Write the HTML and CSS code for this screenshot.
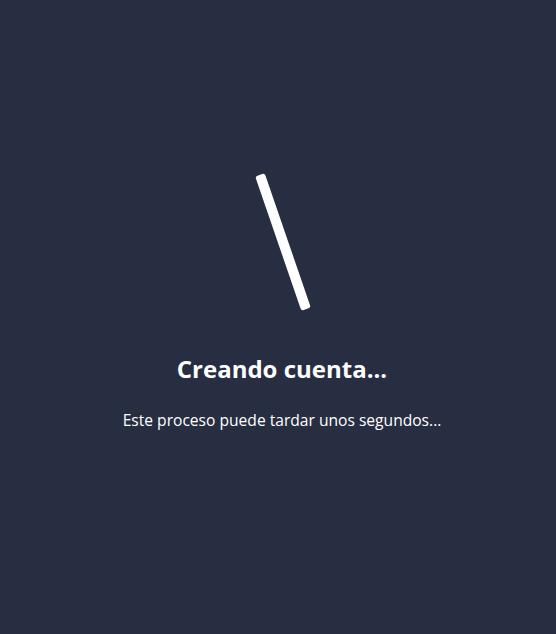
FILE: index.html
```html
<!DOCTYPE html>
<html lang="es">
<head>
<meta charset="utf-8">
<link rel="stylesheet" href="styles.css">
</head>
<body>
<main class="screen">
  <div class="spinner">
    <svg width="70" height="150" viewBox="0 0 70 150">
      <rect x="30" y="4" width="10" height="142" rx="2.5" fill="#ffffff" transform="rotate(-19 35 75)"/>
    </svg>
  </div>
  <h1 class="title">Creando cuenta...</h1>
  <p class="subtitle">Este proceso puede tardar unos segundos...</p>
</main>
</body>
</html>
```
FILE: styles.css
```css
html, body {
  margin: 0;
  padding: 0;
  height: 100%;
  background: #272e41;
}
.screen {
  height: 100%;
  box-sizing: border-box;
  display: flex;
  flex-direction: column;
  align-items: center;
  padding-top: 167px;
  padding-left: 8px;
  font-family: "Open Sans", "Liberation Sans", sans-serif;
  color: #ffffff;
}
.spinner {
  display: flex;
  padding-left: 2px;
}
.spinner svg {
  display: block;
}
.title {
  margin: 35px 0 0;
  font-size: 24px;
  font-weight: 700;
  line-height: 33px;
}
.subtitle {
  margin: 24px 0 0;
  font-size: 15.6px;
  line-height: 22px;
}
```
